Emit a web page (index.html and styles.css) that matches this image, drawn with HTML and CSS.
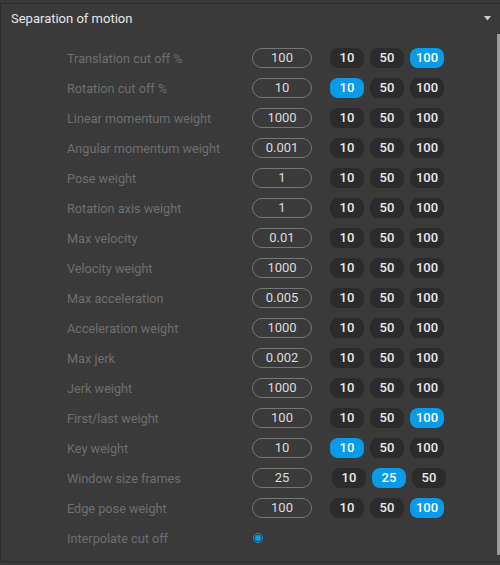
FILE: index.html
```html
<!DOCTYPE html>
<html>
<head>
<meta charset="utf-8">
<link rel="stylesheet" href="styles.css">
</head>
<body>
<div class="topstrip"></div>
<div class="panel">
  <div class="header">
    <span class="title">Separation of motion</span>
    <svg class="caret" width="7" height="5" viewBox="0 0 7 5"><path d="M0 0H7L3.5 4.5Z" fill="#cfcfcf"/></svg>
  </div>
  <div class="body">
    <div class="rows">
      <div class="row"><span class="label">Translation cut off %</span><span class="field">100</span><div class="btns"><span class="btn">10</span><span class="btn">50</span><span class="btn on">100</span></div></div>
      <div class="row"><span class="label">Rotation cut off %</span><span class="field">10</span><div class="btns"><span class="btn on">10</span><span class="btn">50</span><span class="btn">100</span></div></div>
      <div class="row"><span class="label">Linear momentum weight</span><span class="field">1000</span><div class="btns"><span class="btn">10</span><span class="btn">50</span><span class="btn">100</span></div></div>
      <div class="row"><span class="label">Angular momentum weight</span><span class="field">0.001</span><div class="btns"><span class="btn">10</span><span class="btn">50</span><span class="btn">100</span></div></div>
      <div class="row"><span class="label">Pose weight</span><span class="field">1</span><div class="btns"><span class="btn">10</span><span class="btn">50</span><span class="btn">100</span></div></div>
      <div class="row"><span class="label">Rotation axis weight</span><span class="field">1</span><div class="btns"><span class="btn">10</span><span class="btn">50</span><span class="btn">100</span></div></div>
      <div class="row"><span class="label">Max velocity</span><span class="field">0.01</span><div class="btns"><span class="btn">10</span><span class="btn">50</span><span class="btn">100</span></div></div>
      <div class="row"><span class="label">Velocity weight</span><span class="field">1000</span><div class="btns"><span class="btn">10</span><span class="btn">50</span><span class="btn">100</span></div></div>
      <div class="row"><span class="label">Max acceleration</span><span class="field">0.005</span><div class="btns"><span class="btn">10</span><span class="btn">50</span><span class="btn">100</span></div></div>
      <div class="row"><span class="label">Acceleration weight</span><span class="field">1000</span><div class="btns"><span class="btn">10</span><span class="btn">50</span><span class="btn">100</span></div></div>
      <div class="row"><span class="label">Max jerk</span><span class="field">0.002</span><div class="btns"><span class="btn">10</span><span class="btn">50</span><span class="btn">100</span></div></div>
      <div class="row"><span class="label">Jerk weight</span><span class="field">1000</span><div class="btns"><span class="btn">10</span><span class="btn">50</span><span class="btn">100</span></div></div>
      <div class="row"><span class="label">First/last weight</span><span class="field">100</span><div class="btns"><span class="btn">10</span><span class="btn">50</span><span class="btn on">100</span></div></div>
      <div class="row"><span class="label">Key weight</span><span class="field">10</span><div class="btns"><span class="btn on">10</span><span class="btn">50</span><span class="btn">100</span></div></div>
      <div class="row"><span class="label">Window size frames</span><span class="field">25</span><div class="btns shift"><span class="btn">10</span><span class="btn on">25</span><span class="btn">50</span></div></div>
      <div class="row"><span class="label">Edge pose weight</span><span class="field">100</span><div class="btns"><span class="btn">10</span><span class="btn">50</span><span class="btn on">100</span></div></div>
      <div class="row"><span class="label">Interpolate cut off</span><span class="radio"><span class="dot"></span></span></div>
    </div>
    <div class="scrollbar"></div>
  </div>
</div>
<div class="bottom"></div>
</body>
</html>
```

FILE: styles.css
```css
html, body {
  margin: 0;
  padding: 0;
  background: #3a3a3a;
  font-family: Roboto, "Liberation Sans", sans-serif;
  width: 500px;
  height: 565px;
  overflow: hidden;
}
.topstrip {
  height: 3px;
  background: #383838;
  border-bottom: 1px solid #2e2e2e;
}
.panel {
  border-left: 1px solid #2c2c2c;
  height: 557px;
  display: flex;
  flex-direction: column;
  background: #3a3a3a;
}
.header {
  height: 30px;
  display: flex;
  align-items: center;
  justify-content: space-between;
  padding: 0 9px 0 10px;
}
.title {
  color: #e6e6e6;
  font-size: 13px;
  position: relative;
  top: -1px;
}
.caret {
  position: relative;
  top: -1px;
}
.body {
  flex: 1;
  display: flex;
}
.rows {
  flex: 1;
  padding-top: 9px;
  display: flex;
  flex-direction: column;
}
.row {
  height: 30px;
  display: flex;
  align-items: center;
  padding-left: 66px;
}
.label {
  width: 185px;
  color: #6f6f6f;
  font-size: 12.7px;
}
.field {
  width: 58px;
  height: 18px;
  border: 1px solid #767676;
  border-radius: 10px;
  color: #dcdcdc;
  font-size: 13px;
  line-height: 18px;
  text-align: center;
}
.btns {
  display: flex;
  gap: 6px;
  margin-left: 18px;
}
.btns.shift {
  margin-left: 20px;
}
.btn {
  width: 34px;
  height: 20px;
  border-radius: 8px;
  background: #2b2b2b;
  color: #ececec;
  font-size: 13px;
  font-weight: 500;
  line-height: 20px;
  text-align: center;
}
.btn.on {
  background: #0a9be8;
  color: #ffffff;
}
.radio {
  width: 8px;
  height: 8px;
  border: 1px solid #1299e0;
  border-radius: 50%;
  display: flex;
  align-items: center;
  justify-content: center;
  margin-left: 1px;
}
.dot {
  width: 6px;
  height: 6px;
  border-radius: 50%;
  background: #0a9be8;
}
.scrollbar {
  width: 3px;
  background: #9a9a9a;
  margin-bottom: 6px;
}
.bottom {
  height: 4px;
  border-top: 1px solid #2a2a2a;
  background: #383838;
}
```
